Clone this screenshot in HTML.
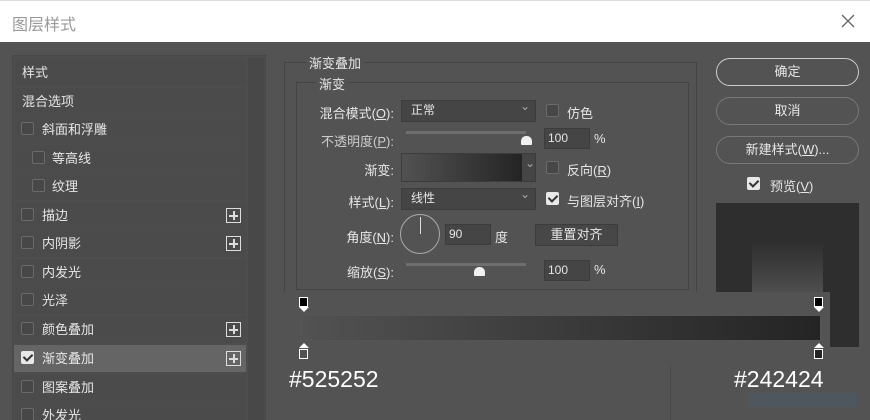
<!DOCTYPE html><html><head><meta charset="utf-8"><style>
*{margin:0;padding:0;box-sizing:border-box}
html{width:870px;height:420px;overflow:hidden}
body{width:870px;height:420px;background:#535353;position:relative;overflow:hidden;font-family:"Liberation Sans","Noto Sans CJK SC",sans-serif;color:#e6e6e6;font-size:13px}
.a{position:absolute}
.row{position:absolute;left:14px;width:232px;height:27px;background:#4b4b4b;line-height:27px;padding-left:8px}
.cb{position:absolute;width:13px;height:13px;border:1px solid #6a6a6a;background:#474747;border-radius:2px}
.cbk{background:#e8e8e8;border-color:#e8e8e8}
.cbk::after{content:"";position:absolute;left:3px;top:0px;width:4px;height:7px;border:solid #333;border-width:0 2px 2px 0;transform:rotate(45deg)}
.plus{position:absolute;left:212px;top:6px;width:15px;height:15px;border:1px solid #ddd;}
.plus::before{content:"";position:absolute;left:2px;top:6px;width:9px;height:1.5px;background:#ddd}
.plus::after{content:"";position:absolute;left:6px;top:2px;width:1.5px;height:9px;background:#ddd}
.lbl{position:absolute;text-align:right;width:110px;left:284px}
.inp{position:absolute;background:#454545;border:1px solid #3c3c3c;padding-left:3px;line-height:19px;font-size:12px}
.dd::after{content:"⌄";position:absolute;right:5px;top:-4px;color:#aaa;font-size:12px}
.btn{position:absolute;left:716px;width:143px;height:28px;border:1px solid #8a8a8a;border-radius:14px;text-align:center;line-height:26px}
.track{position:absolute;height:3px;background:#6e6e6e;width:120px;left:406px}
.thumb{position:absolute;width:11px;height:9px;background:#f0f0f0;border-radius:5px 5px 1px 1px}
</style></head><body>
<div class="a" style="left:0;top:0;width:870px;height:42px;background:#fff;border-top:1px solid #ddd"></div>
<div class="a" style="left:12px;top:11px;font-size:16px;color:#999">图层样式</div>
<svg class="a" style="left:841px;top:14px" width="14" height="14"><path d="M1 1L13 13M13 1L1 13" stroke="#666" stroke-width="1.3"/></svg>

<div class="a" style="left:12px;top:55px;width:254px;height:365px;border:1px solid #484848;border-bottom:none;background:#4d4d4d"></div>
<div class="a" style="left:248px;top:58px;width:16px;height:362px;background:#484848"></div>
<div class="row" style="top:59px">样式</div>
<div class="row" style="top:88px">混合选项</div>
<div class="row" style="top:116px"><div class="cb" style="left:7px;top:6px"></div><span style="margin-left:20px">斜面和浮雕</span></div>
<div class="row" style="top:145px"><div class="cb" style="left:18px;top:6px"></div><span style="margin-left:30px">等高线</span></div>
<div class="row" style="top:173px"><div class="cb" style="left:18px;top:6px"></div><span style="margin-left:30px">纹理</span></div>
<div class="row" style="top:202px"><div class="cb" style="left:7px;top:6px"></div><span style="margin-left:20px">描边</span><div class="plus"></div></div>
<div class="row" style="top:230px"><div class="cb" style="left:7px;top:6px"></div><span style="margin-left:20px">内阴影</span><div class="plus"></div></div>
<div class="row" style="top:259px"><div class="cb" style="left:7px;top:6px"></div><span style="margin-left:20px">内发光</span></div>
<div class="row" style="top:287px"><div class="cb" style="left:7px;top:6px"></div><span style="margin-left:20px">光泽</span></div>
<div class="row" style="top:316px"><div class="cb" style="left:7px;top:6px"></div><span style="margin-left:20px">颜色叠加</span><div class="plus"></div></div>
<div class="row" style="top:345px;background:#656565"><div class="cb cbk" style="left:7px;top:6px"></div><span style="margin-left:20px">渐变叠加</span><div class="plus"></div></div>
<div class="row" style="top:374px"><div class="cb" style="left:7px;top:6px"></div><span style="margin-left:20px">图案叠加</span></div>
<div class="row" style="top:402px;height:18px"><div class="cb" style="left:7px;top:6px"></div><span style="margin-left:20px">外发光</span></div>

<div class="a" style="left:284px;top:62px;width:413px;height:358px;border:1px solid #444;border-bottom:none"></div>
<div class="a" style="left:296px;top:82px;width:393px;height:208px;border:1px solid #444"></div>
<div class="a" style="left:306px;top:53px;background:#535353;padding:0 3px">渐变叠加</div>
<div class="a" style="left:316px;top:74px;background:#535353;padding:0 3px">渐变</div>

<div class="lbl" style="top:103px">混合模式(<u>O</u>):</div>
<div class="inp dd" style="left:401px;top:100px;width:135px;height:22px;padding-left:9px">正常</div>
<div class="cb" style="left:546px;top:104px"></div><div class="a" style="left:567px;top:103px">仿色</div>

<div class="lbl" style="top:131px;color:#ccc">不透明度(<u>P</u>):</div>
<div class="track" style="top:131px"></div><div class="thumb" style="left:521px;top:136px"></div>
<div class="inp" style="left:544px;top:128px;width:46px;height:21px">100</div><div class="a" style="left:594px;top:131px">%</div>

<div class="lbl" style="top:160px">渐变:</div>
<div class="a" style="left:401px;top:153px;width:135px;height:29px;border:1px solid #3c3c3c;background:#454545"></div>
<div class="a" style="left:402px;top:154px;width:120px;height:27px;background:linear-gradient(90deg,#525252,#242424)"></div>
<div class="a" style="left:525px;top:156px;color:#aaa;font-size:12px">⌄</div>
<div class="cb" style="left:546px;top:161px"></div><div class="a" style="left:567px;top:160px">反向(<u>R</u>)</div>

<div class="lbl" style="top:192px">样式(<u>L</u>):</div>
<div class="inp dd" style="left:401px;top:188px;width:135px;height:22px;padding-left:9px">线性</div>
<div class="cb cbk" style="left:546px;top:192px"></div><div class="a" style="left:567px;top:191px">与图层对齐(<u>I</u>)</div>

<div class="lbl" style="top:227px">角度(<u>N</u>):</div>
<div class="a" style="left:400px;top:214px;width:40px;height:40px;border:1px solid #aaa;border-radius:50%"></div>
<div class="a" style="left:419.5px;top:217px;width:1px;height:17px;background:#ddd"></div>
<div class="inp" style="left:445px;top:224px;width:46px;height:21px">90</div><div class="a" style="left:495px;top:227px">度</div>
<div class="a" style="left:535px;top:224px;width:83px;height:22px;background:#474747;border:1px solid #3c3c3c;text-align:center;line-height:20px">重置对齐</div>

<div class="lbl" style="top:262px">缩放(<u>S</u>):</div>
<div class="track" style="top:263px"></div><div class="thumb" style="left:474px;top:267px"></div>
<div class="inp" style="left:544px;top:260px;width:46px;height:21px">100</div><div class="a" style="left:594px;top:262px">%</div>

<div class="btn" style="top:58px;border-color:#ccc">确定</div>
<div class="btn" style="top:97px;border-color:#777">取消</div>
<div class="btn" style="top:136px;border-color:#777">新建样式(<u>W</u>)...</div>
<div class="cb cbk" style="left:747px;top:177px"></div><div class="a" style="left:770px;top:176px">预览(<u>V</u>)</div>

<div class="a" style="left:716px;top:203px;width:143px;height:144px;background:#2e2e2e"></div>
<div class="a" style="left:752px;top:239px;width:71px;height:60px;background:linear-gradient(#2c2c2c,#525252)"></div>

<div class="a" style="left:284px;top:292px;width:546px;height:128px;background:#535353"></div>
<div class="a" style="left:301px;top:315px;width:520px;height:26px;border:1px solid #555;background:linear-gradient(90deg,#525252,#242424)"></div>
<svg class="a" style="left:298px;top:297px" width="12" height="18"><rect x="1.5" y="0.5" width="8" height="9" fill="#000" stroke="#fff"/><path d="M1 10h10l-5 5z" fill="#fff"/></svg>
<svg class="a" style="left:813px;top:297px" width="12" height="18"><rect x="1.5" y="0.5" width="8" height="9" fill="#000" stroke="#fff"/><path d="M1 10h10l-5 5z" fill="#fff"/></svg>
<svg class="a" style="left:298px;top:342px" width="12" height="18"><path d="M1 6h10l-5-5z" fill="#fff"/><rect x="1.5" y="7.5" width="8" height="9" fill="#525252" stroke="#fff"/></svg>
<svg class="a" style="left:813px;top:342px" width="12" height="18"><path d="M1 6h10l-5-5z" fill="#fff"/><rect x="1.5" y="7.5" width="8" height="9" fill="#242424" stroke="#fff"/></svg>
<div class="a" style="left:289px;top:366px;font-size:23px;color:#fff">#525252</div>
<div class="a" style="left:734px;top:366px;font-size:23px;color:#fff">#242424</div>
<div class="a" style="left:670px;top:366px;width:1px;height:54px;background:#4a4a4a"></div>
<div class="a" style="left:747px;top:393px;width:110px;height:14px;background:#4a5a6a;opacity:.5"></div>
</body></html>
